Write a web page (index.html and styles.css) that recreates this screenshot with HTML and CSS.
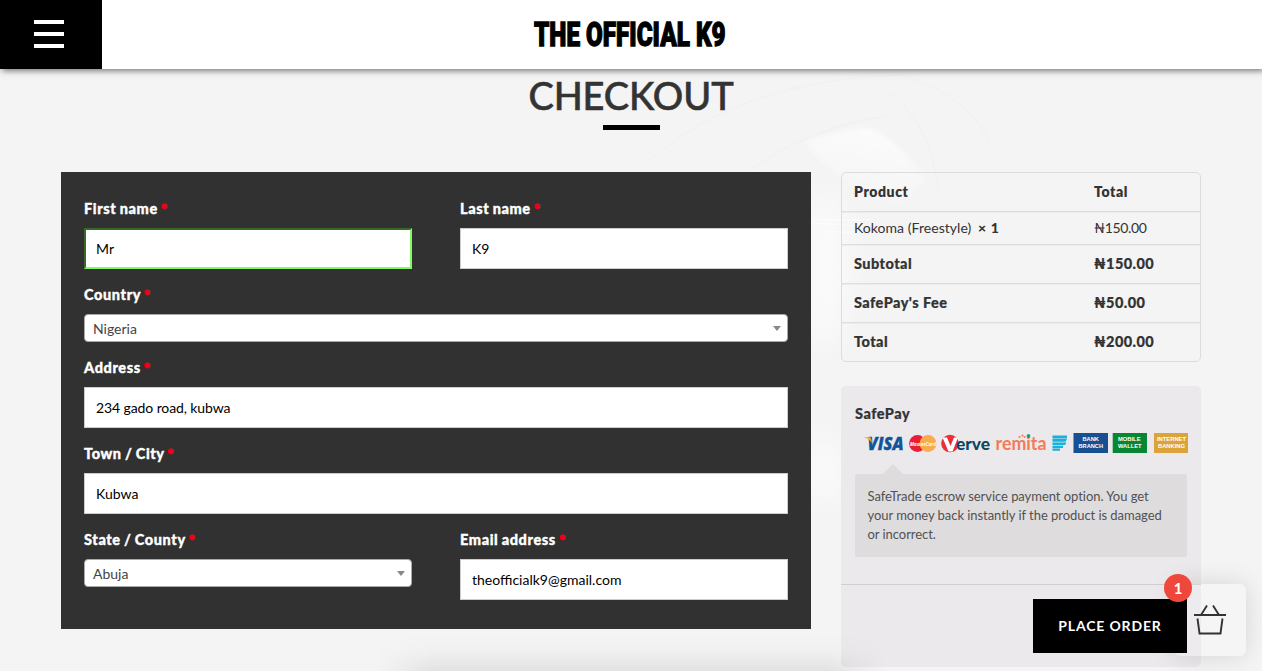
FILE: index.html
```html
<!DOCTYPE html>
<html lang="en">
<head>
<meta charset="utf-8">
<title>Checkout – The Official K9</title>
<link rel="stylesheet" href="styles.css">
</head>
<body>
<svg class="backdrop" viewBox="0 0 1262 671" aria-hidden="true">
  <defs>
    <filter id="soft" x="-40%" y="-40%" width="180%" height="180%"><feGaussianBlur stdDeviation="12"/></filter>
    <filter id="slight" x="-10%" y="-10%" width="120%" height="120%"><feGaussianBlur stdDeviation="2"/></filter>
    <linearGradient id="glow" x1="0.7" y1="0" x2="0.4" y2="1"><stop offset="0" stop-color="#fff" stop-opacity=".7"/><stop offset="1" stop-color="#fff" stop-opacity="0"/></linearGradient>
  </defs>
  <path d="M805 142Q830 133 867 127Q900 140 925 180L900 205Q840 190 805 142Z" fill="url(#glow)" filter="url(#slight)"/>
  <ellipse cx="825" cy="270" rx="24" ry="80" fill="#fff" opacity=".5" filter="url(#soft)"/>
  <ellipse cx="825" cy="470" rx="20" ry="35" fill="#fff" opacity=".5" filter="url(#soft)"/>
  <g fill="none" stroke="#f0f0f0" stroke-width="1">
    <path d="M650 160Q740 80 900 75Q960 90 990 140"/>
    <path d="M740 178Q800 130 885 116"/>
    <path d="M885 90Q930 120 938 190"/>
  </g>
  <path d="M811 220H870M811 223L862 226M830 232H862" fill="none" stroke="#fff" stroke-width="1.2" opacity=".7"/>
</svg>
<header class="topbar">
  <button class="menu" aria-label="Menu"><span></span><span></span><span></span></button>
  <svg class="brand" width="198" height="40" viewBox="0 0 198 40"><text x="3" y="31" textLength="191.500" lengthAdjust="spacingAndGlyphs">THE OFFICIAL K9</text></svg>
</header>
<main>
  <h1>CHECKOUT</h1>
  <div class="rule"></div>
  <div class="columns">
    <form class="billing">
      <div class="field"><label>First name <i>*</i></label><div class="input focus">Mr</div></div>
      <div class="field"><label>Last name <i>*</i></label><div class="input">K9</div></div>
      <div class="field wide"><label>Country <i>*</i></label><div class="select">Nigeria</div></div>
      <div class="field wide"><label>Address <i>*</i></label><div class="input address">234 gado road, kubwa</div></div>
      <div class="field wide"><label>Town / City <i>*</i></label><div class="input">Kubwa</div></div>
      <div class="field"><label>State / County <i>*</i></label><div class="select">Abuja</div></div>
      <div class="field"><label>Email address <i>*</i></label><div class="input">theofficialk9@gmail.com</div></div>
    </form>
    <aside>
      <div class="order">
        <div class="row head"><span>Product</span><span>Total</span></div>
        <div class="row item"><span>Kokoma (Freestyle) <b>× 1</b></span><span class="price">₦150.00</span></div>
        <div class="row"><span>Subtotal</span><span>₦150.00</span></div>
        <div class="row"><span>SafePay's Fee</span><span>₦50.00</span></div>
        <div class="row"><span>Total</span><span>₦200.00</span></div>
      </div>
      <div class="payment">
        <div class="method">
          <div class="method-name">SafePay</div>
          <svg class="cards" width="328" height="22" viewBox="0 0 328 22">
            <text class="visa" x="4.500" y="17.300" textLength="36" lengthAdjust="spacingAndGlyphs">VISA</text>
            <path d="M.5 4.200H7.500L9.500 10.500Q6.500 5.500 .5 4.200Z" fill="#f2a63b"/>
            <circle cx="54.500" cy="10.500" r="8.400" fill="#eb1c35"/>
            <circle cx="65" cy="10.500" r="8.400" fill="#fbab4a"/>
            <text class="mc" x="47" y="13" textLength="26" lengthAdjust="spacingAndGlyphs">MasterCard</text>
            <circle cx="87" cy="10.500" r="8.800" fill="#ee2e36"/>
            <path d="M79.500 4.500H84L87.500 13L91 4.500H95L89.500 18.500H85.500Z" fill="#fff"/>
            <text class="verve" x="93" y="16.600" textLength="34" lengthAdjust="spacingAndGlyphs">erve</text>
            <text class="remita" x="132.500" y="16.600" textLength="51" lengthAdjust="spacingAndGlyphs">remita</text>
            <g fill="#f47b5a"><circle cx="156.500" cy="4" r="1.100"/><circle cx="159.500" cy="2.600" r="1.100"/><circle cx="161.700" cy="4" r="1"/></g>
            <circle cx="165.500" cy="3" r="1.900" fill="#16a28d"/>
            <path d="M189.500 2.500H204V5.400H189.500ZM189.500 6.100H204L202.500 8.800H189.500ZM189.500 9.500H203.500L202 12H189.500ZM189.500 12.700H200V15H189.500ZM189.500 15.600H197V17.800H189.500Z" fill="#16b1dc"/>
            <path d="M210.500 0H245V20H210.500Z" fill="#174f91"/><path d="M249.700 0H284V20H249.700Z" fill="#078633"/><path d="M291 0H325V20H291Z" fill="#dca339"/>
            <g class="tag">
              <text x="219.500" y="8.200" textLength="16.500" lengthAdjust="spacingAndGlyphs">BANK</text><text x="215.500" y="15.200" textLength="24.500" lengthAdjust="spacingAndGlyphs">BRANCH</text>
              <text x="255" y="8.200" textLength="22.500" lengthAdjust="spacingAndGlyphs">MOBILE</text><text x="255" y="15.200" textLength="23.500" lengthAdjust="spacingAndGlyphs">WALLET</text>
              <text x="294" y="8.200" textLength="29" lengthAdjust="spacingAndGlyphs">INTERNET</text><text x="295" y="15.200" textLength="27" lengthAdjust="spacingAndGlyphs">BANKING</text>
            </g>
          </svg>
          <p class="tip">SafeTrade escrow service payment option. You get<br>your money back instantly if the product is damaged<br>or incorrect.</p>
        </div>
        <div class="actions"><button class="place">PLACE ORDER</button></div>
      </div>
    </aside>
  </div>
</main>
<div class="drawer-shade"></div>
<div class="cart">
  <span class="count">1</span>
  <svg class="basket" width="34" height="32" viewBox="0 0 34 32"><path d="M1 11H33M8 11L14 1.500M26 11L20 1.500M4.500 14.500L6.500 29.500H27.500L29.500 14.500" fill="none" stroke="#333" stroke-width="1.900"/></svg>
</div>
</body>
</html>
```

FILE: styles.css
```css
* { box-sizing: border-box; }
body {
  margin: 0;
  height: 671px;
  overflow: hidden;
  position: relative;
  background: #f4f4f4;
  color: #333;
  font-family: Lato, sans-serif;
  font-size: 14px;
}
button { border: 0; font-family: inherit; }
.backdrop { position: absolute; inset: 0; width: 1262px; height: 671px; }
.topbar {
  position: relative;
  z-index: 2;
  height: 69px;
  display: flex;
  align-items: center;
  background: #fff;
  box-shadow: 2px 2px 6px rgba(0, 0, 0, .5);
}
.menu {
  width: 102px;
  height: 69px;
  padding: 0 0 1px 34px;
  display: flex;
  flex-direction: column;
  justify-content: center;
  gap: 8px;
  background: #000;
}
.menu span { width: 30px; height: 4px; background: #fff; }
.brand { margin-left: 429px; overflow: visible; }
.brand text { font: 900 33px Roboto, sans-serif; fill: #000; stroke: #000; stroke-width: 1.3px; }
main { position: relative; }
h1 {
  margin: 0;
  padding-top: 3px;
  height: 56px;
  font-size: 38px;
  font-weight: 500;
  line-height: 46px;
  text-align: center;
  letter-spacing: -.1px;
  -webkit-text-stroke: .55px #333;
}
.rule { width: 57px; height: 5px; margin: 0 0 42px 603px; background: #000; }
.columns { display: flex; gap: 30px; padding-left: 61px; }
.billing {
  width: 750px;
  height: 457px;
  padding: 27px 23px 29px;
  display: grid;
  grid-template-columns: 328px 328px;
  column-gap: 48px;
  row-gap: 16px;
  align-content: start;
  background: #313131;
}
.wide { grid-column: 1 / 3; }
label {
  display: block;
  height: 29px;
  color: #fff;
  font-size: 14.500px;
  font-weight: 900;
  line-height: 20px;
  letter-spacing: .62px;
  word-spacing: -.8px;
  -webkit-text-stroke: .35px #fff;
}
label i { color: #f00018; font-size: 14px; font-style: normal; -webkit-text-stroke: 1.2px #f00018; }
.input {
  height: 41px;
  padding: 0 11px;
  border: 1px solid #ccc;
  background: #fff;
  color: #000;
  line-height: 40px;
}
.input.address { letter-spacing: -.1px; }
.input.focus { padding: 0 10px; border: 2px solid; border-color: #366b27 #82fb62 #82fb62 #366b27; line-height: 38px; }
.select {
  height: 28px;
  padding: 0 6px 0 8px;
  display: flex;
  align-items: center;
  justify-content: space-between;
  border: 1px solid #aaa;
  border-radius: 4px;
  background: #fff;
  color: #444;
}
.select::after { content: ""; border: 4px solid transparent; border-top: 5px solid #888; border-bottom: 0; }
aside { width: 360px; }
.order { height: 190px; border: 1px solid #dcdcdc; border-radius: 5px; }
.row {
  height: 39px;
  padding: 0 12px 2px;
  display: grid;
  grid-template-columns: 240px 1fr;
  align-items: center;
  border-bottom: 1px solid #dedede;
  box-shadow: 0 1px #ececec;
  font-size: 14.500px;
  font-weight: 900;
  letter-spacing: .45px;
  -webkit-text-stroke: .2px #333;
}
.row:last-child { height: 38px; border-bottom: 0; box-shadow: none; }
.row.head { font-size: 14px; font-weight: 800; letter-spacing: .6px; -webkit-text-stroke: 0; }
.row.item { height: 33px; font-size: 14px; font-weight: 400; letter-spacing: .05px; -webkit-text-stroke: 0; }
.item .price { letter-spacing: -.35px; }
.item b { margin-left: 3px; font-weight: 900; letter-spacing: .7px; }
.payment { height: 281px; margin-top: 24px; border-radius: 5px; background: #ebe9eb; }
.method { height: 199px; padding: 18px 14px 0; border-bottom: 1px solid #d0ced2; }
.method-name { height: 29px; font-size: 14.500px; font-weight: 900; line-height: 20px; letter-spacing: .5px; -webkit-text-stroke: .2px #333; }
.cards { display: block; margin-left: 8px; overflow: visible; }
.visa { font: italic 800 17px "Open Sans", sans-serif; fill: #11549a; stroke: #11549a; stroke-width: .3px; }
.mc { font: italic 700 6px "Open Sans", sans-serif; fill: #fff; }
.verve { font: 900 17px Lato, sans-serif; fill: #074863; }
.remita { font: 700 18px Lato, sans-serif; fill: #f47b5a; }
.tag { font: 800 5.500px "Liberation Sans", sans-serif; fill: #fff; }
.tip {
  position: relative;
  width: 332px;
  height: 83px;
  margin: 19px 0 0;
  padding: 13px 12.500px;
  border-radius: 2px;
  background: #dfdcde;
  color: #515151;
  font-size: 13px;
  line-height: 19px;
  letter-spacing: -.05px;
  white-space: nowrap;
}
.tip::before {
  content: "";
  position: absolute;
  left: 28px;
  top: -10px;
  border: 10px solid transparent;
  border-top: 0;
  border-bottom-color: #dfdcde;
}
.actions { padding: 14px 14px 0; display: flex; justify-content: flex-end; }
.place {
  position: relative;
  z-index: 4;
  width: 154px;
  height: 54px;
  padding: 0 0 2px;
  background: #000;
  color: #fff;
  font-size: 14px;
  font-weight: 700;
  letter-spacing: .85px;
}
.drawer-shade {
  position: absolute;
  left: 375px;
  bottom: 0;
  width: 512px;
  height: 36px;
  background: linear-gradient(transparent, rgba(0, 0, 0, .015) 45%, rgba(0, 0, 0, .07));
  -webkit-mask-image: linear-gradient(90deg, transparent, #000 60px, #000 452px, transparent);
}
.cart {
  position: absolute;
  left: 1174px;
  top: 584px;
  width: 72px;
  height: 72px;
  border-radius: 6px;
  background: rgba(255, 255, 255, .12);
  box-shadow: 0 0 26px rgba(0, 0, 0, .13);
}
.basket { position: absolute; z-index: 5; left: 19px; top: 20px; }
.count {
  position: absolute;
  z-index: 5;
  left: -10px;
  top: -10px;
  width: 28px;
  height: 28px;
  border-radius: 50%;
  background: #ef473c;
  color: #fff;
  font-size: 15px;
  font-weight: 700;
  line-height: 28px;
  text-align: center;
}
```
